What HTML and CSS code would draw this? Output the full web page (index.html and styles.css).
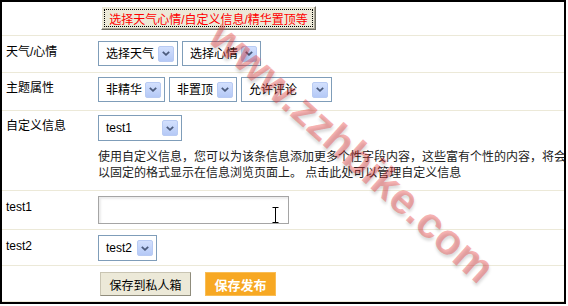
FILE: index.html
```html
<!DOCTYPE html>
<html lang="zh-CN">
<head>
    <meta charset="UTF-8">
    <title>发布信息</title>
    <link rel="stylesheet" href="styles.css">
</head>
<body>
    <div class="box">
        <div class="row row_top">
            <div class="lbl"></div>
            <div class="val">
                <button class="btn_opt">选择天气心情/自定义信息/精华置顶等</button>
            </div>
        </div>
        <div class="row">
            <div class="lbl">天气/心情</div>
            <div class="val">
                <div class="sel w80"><span>选择天气</span><i class="arr"><svg width="8" height="5" viewBox="0 0 8 5"><path d="M0.8 0.8L4 3.8L7.2 0.8" stroke="#4b5b7c" stroke-width="1.8" fill="none"/></svg></i></div>
                <div class="sel w79"><span>选择心情</span><i class="arr"><svg width="8" height="5" viewBox="0 0 8 5"><path d="M0.8 0.8L4 3.8L7.2 0.8" stroke="#4b5b7c" stroke-width="1.8" fill="none"/></svg></i></div>
            </div>
        </div>
        <div class="row row_attr">
            <div class="lbl">主题属性</div>
            <div class="val">
                <div class="sel w67"><span>非精华</span><i class="arr"><svg width="8" height="5" viewBox="0 0 8 5"><path d="M0.8 0.8L4 3.8L7.2 0.8" stroke="#4b5b7c" stroke-width="1.8" fill="none"/></svg></i></div>
                <div class="sel w68"><span>非置顶</span><i class="arr"><svg width="8" height="5" viewBox="0 0 8 5"><path d="M0.8 0.8L4 3.8L7.2 0.8" stroke="#4b5b7c" stroke-width="1.8" fill="none"/></svg></i></div>
                <div class="sel w91"><span>允许评论</span><i class="arr"><svg width="8" height="5" viewBox="0 0 8 5"><path d="M0.8 0.8L4 3.8L7.2 0.8" stroke="#4b5b7c" stroke-width="1.8" fill="none"/></svg></i></div>
            </div>
        </div>
        <div class="row row_custom">
            <div class="lbl">自定义信息</div>
            <div class="val col">
                <div class="sel w84 h26"><span>test1</span><i class="arr"><svg width="8" height="5" viewBox="0 0 8 5"><path d="M0.8 0.8L4 3.8L7.2 0.8" stroke="#4b5b7c" stroke-width="1.8" fill="none"/></svg></i></div>
                <p class="desc">使用自定义信息，您可以为该条信息添加更多个性字段内容，这些富有个性的内容，将会<br>以固定的格式显示在信息浏览页面上。 点击此处可以管理自定义信息</p>
            </div>
        </div>
        <div class="row row_input">
            <div class="lbl">test1</div>
            <div class="val">
                <div class="inp_wrap">
                    <input class="inp" type="text">
                    <svg class="ibeam" width="7" height="16" viewBox="0 0 7 16"><path d="M0.5 0.5H6.5M3.5 0.5V15.5M0.5 15.5H6.5" stroke="#000" stroke-width="1" fill="none"/></svg>
                </div>
            </div>
        </div>
        <div class="row row_t2">
            <div class="lbl">test2</div>
            <div class="val">
                <div class="sel w59 h26"><span>test2</span><i class="arr"><svg width="8" height="5" viewBox="0 0 8 5"><path d="M0.8 0.8L4 3.8L7.2 0.8" stroke="#4b5b7c" stroke-width="1.8" fill="none"/></svg></i></div>
            </div>
        </div>
        <div class="row row_btns">
            <div class="lbl"></div>
            <div class="val">
                <button class="btn_save">保存到私人箱</button>
                <button class="btn_pub">保存发布</button>
            </div>
        </div>
        <div class="mark">www.zzhbike.com</div>
    </div>
</body>
</html>
```
FILE: styles.css
```css
body {
    margin: 0;
    font-family: "Liberation Sans", "Noto Sans CJK SC", sans-serif;
    font-size: 12px;
    color: #000;
    background: #fff;
}
.box {
    position: relative;
    width: 566px;
    height: 304px;
    box-sizing: border-box;
    border: 2px solid #000;
    overflow: hidden;
}
.row {
    display: flex;
    padding: 5px 0 6px;
    border-bottom: 1px solid #ece9d8;
}
.row_top {
    padding: 4px 0 5px;
}
.row_attr {
    padding: 4px 0 8px;
}
.row_custom {
    padding: 4px 0 9px;
}
.row_input {
    padding: 5px 0 5px;
}
.row_t2 {
    padding: 5px 0 4px;
}
.row_btns {
    padding: 6px 0 5px;
}
.lbl {
    width: 96px;
    flex: none;
    box-sizing: border-box;
    padding: 4px 0 0 4px;
    line-height: 14px;
}
.val {
    display: flex;
    align-items: center;
    gap: 4px;
}
.val.col {
    flex-direction: column;
    align-items: flex-start;
    gap: 0;
}
.sel {
    display: flex;
    align-items: center;
    justify-content: space-between;
    height: 25px;
    box-sizing: border-box;
    border: 1px solid #7f9db9;
    background: #fff;
    padding: 0 3px 0 7px;
    line-height: 14px;
}
.h26 {
    height: 26px;
}
.w80 { width: 80px; }
.w79 { width: 79px; }
.w67 { width: 67px; }
.w68 { width: 68px; }
.w91 { width: 91px; }
.w84 { width: 84px; }
.w59 { width: 59px; }
.arr {
    display: flex;
    align-items: center;
    justify-content: center;
    width: 16px;
    height: 16px;
    box-sizing: border-box;
    border: 1px solid #b9cbf3;
    border-radius: 2px;
    background: linear-gradient(#d3e0fd, #b5c9f6);
}
.btn_opt {
    margin-left: 3px;
    width: 215px;
    height: 24px;
    padding: 0;
    font: 12px "Liberation Sans", "Noto Sans CJK SC", sans-serif;
    color: #f00;
    background: #ece9d8;
    border: 1px solid;
    border-color: #fff #716f64 #716f64 #fff;
    box-shadow: inset -1px -1px 0 #aca899;
    outline: 1px dotted #000;
    outline-offset: -4px;
}
.desc {
    margin: 8px 0 0;
    width: 468px;
    line-height: 16px;
    color: #222;
}
.inp_wrap {
    position: relative;
}
.inp {
    display: block;
    width: 191px;
    height: 28px;
    box-sizing: border-box;
    margin: 0;
    border: 1px solid #a5a5a5;
    box-shadow: inset 2px 2px 2px #ececec;
    background: #fff;
}
.ibeam {
    position: absolute;
    left: 174px;
    top: 11px;
}
.btn_save {
    margin-left: 2px;
    width: 91px;
    height: 24px;
    padding: 0;
    font: 12px "Liberation Sans", "Noto Sans CJK SC", sans-serif;
    color: #000;
    background: #ece9d8;
    border: 1px solid;
    border-color: #c9c5b3 #8f8c7c #8f8c7c #c9c5b3;
}
.btn_pub {
    margin-left: 10px;
    width: 71px;
    height: 24px;
    padding: 0;
    font: bold 13px "Liberation Sans", "Noto Sans CJK SC", sans-serif;
    color: #fff;
    background: #f7a823;
    border: 1px solid #f9bd55;
}
.mark {
    position: absolute;
    left: 350px;
    top: 150px;
    transform: translate(-50%, -50%) rotate(42deg);
    font: bold 43px "Liberation Sans", sans-serif;
    color: rgba(236, 56, 56, 0.38);
    text-shadow: 2px 2px 3px rgba(0, 0, 0, 0.15);
    white-space: nowrap;
    pointer-events: none;
}
```
